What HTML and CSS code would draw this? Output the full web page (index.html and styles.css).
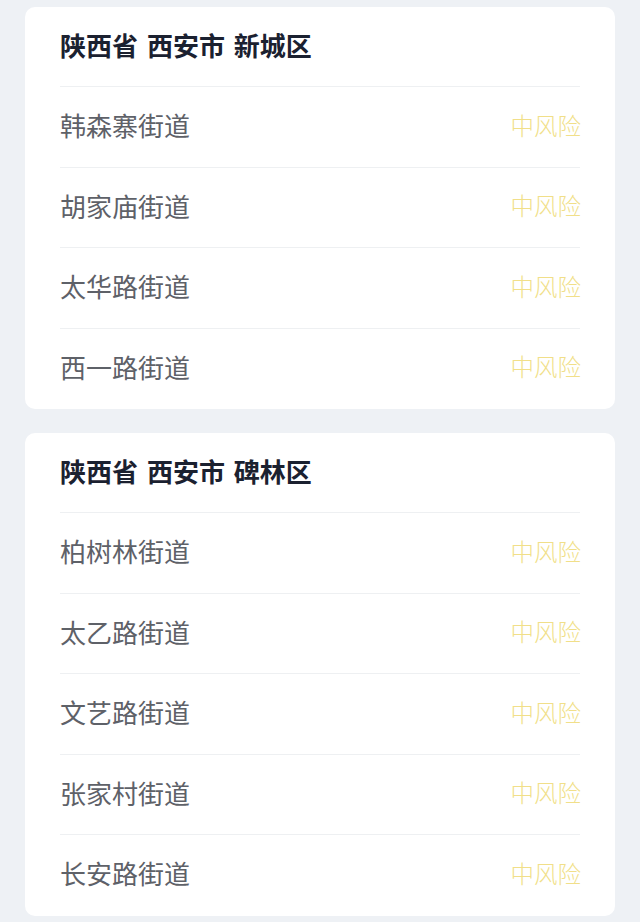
FILE: index.html
```html
<!DOCTYPE html>
<html lang="zh-CN">
<head>
    <meta charset="UTF-8">
    <meta name="viewport" content="width=device-width, initial-scale=1.0">
    <title>风险地区</title>
    <link rel="stylesheet" href="styles.css">
</head>
<body>
    <div class="list">
        <!-- 新城区 -->
        <div class="card">
            <div class="card-title">陕西省 西安市 新城区</div>
            <ul>
                <li><span class="name">韩森寨街道</span><span class="risk">中风险</span></li>
                <li><span class="name">胡家庙街道</span><span class="risk">中风险</span></li>
                <li><span class="name">太华路街道</span><span class="risk">中风险</span></li>
                <li><span class="name">西一路街道</span><span class="risk">中风险</span></li>
            </ul>
        </div>

        <!-- 碑林区 -->
        <div class="card">
            <div class="card-title">陕西省 西安市 碑林区</div>
            <ul>
                <li><span class="name">柏树林街道</span><span class="risk">中风险</span></li>
                <li><span class="name">太乙路街道</span><span class="risk">中风险</span></li>
                <li><span class="name">文艺路街道</span><span class="risk">中风险</span></li>
                <li><span class="name">张家村街道</span><span class="risk">中风险</span></li>
                <li><span class="name">长安路街道</span><span class="risk">中风险</span></li>
            </ul>
        </div>
    </div>
</body>
</html>
```

FILE: styles.css
```css
* {
    margin: 0;
    padding: 0;
    box-sizing: border-box;
}
ul {
    list-style: none;
}
body {
    background-color: #eef1f5;
    font-family: "Noto Sans CJK SC", "Noto Sans", sans-serif;
}
.list {
    display: flex;
    flex-direction: column;
    gap: 24px;
    padding: 7px 25px 0;
}
.card {
    background-color: #fff;
    border-radius: 10px;
    padding: 0 35px 1px;
}
.card-title {
    height: 79px;
    display: flex;
    align-items: center;
    padding-bottom: 4px;
    font-size: 26px;
    font-weight: bold;
    color: #1b2130;
    word-spacing: 3px;
}
.card li {
    height: 80.5px;
    padding-bottom: 4px;
    border-top: 1px solid #eef0f2;
    display: flex;
    align-items: center;
    justify-content: space-between;
}
.card .name {
    font-size: 26px;
    color: #5e6168;
}
.card .risk {
    font-size: 23.5px;
    font-weight: 300;
    color: #f1df89;
    margin-right: -1px;
}
```
